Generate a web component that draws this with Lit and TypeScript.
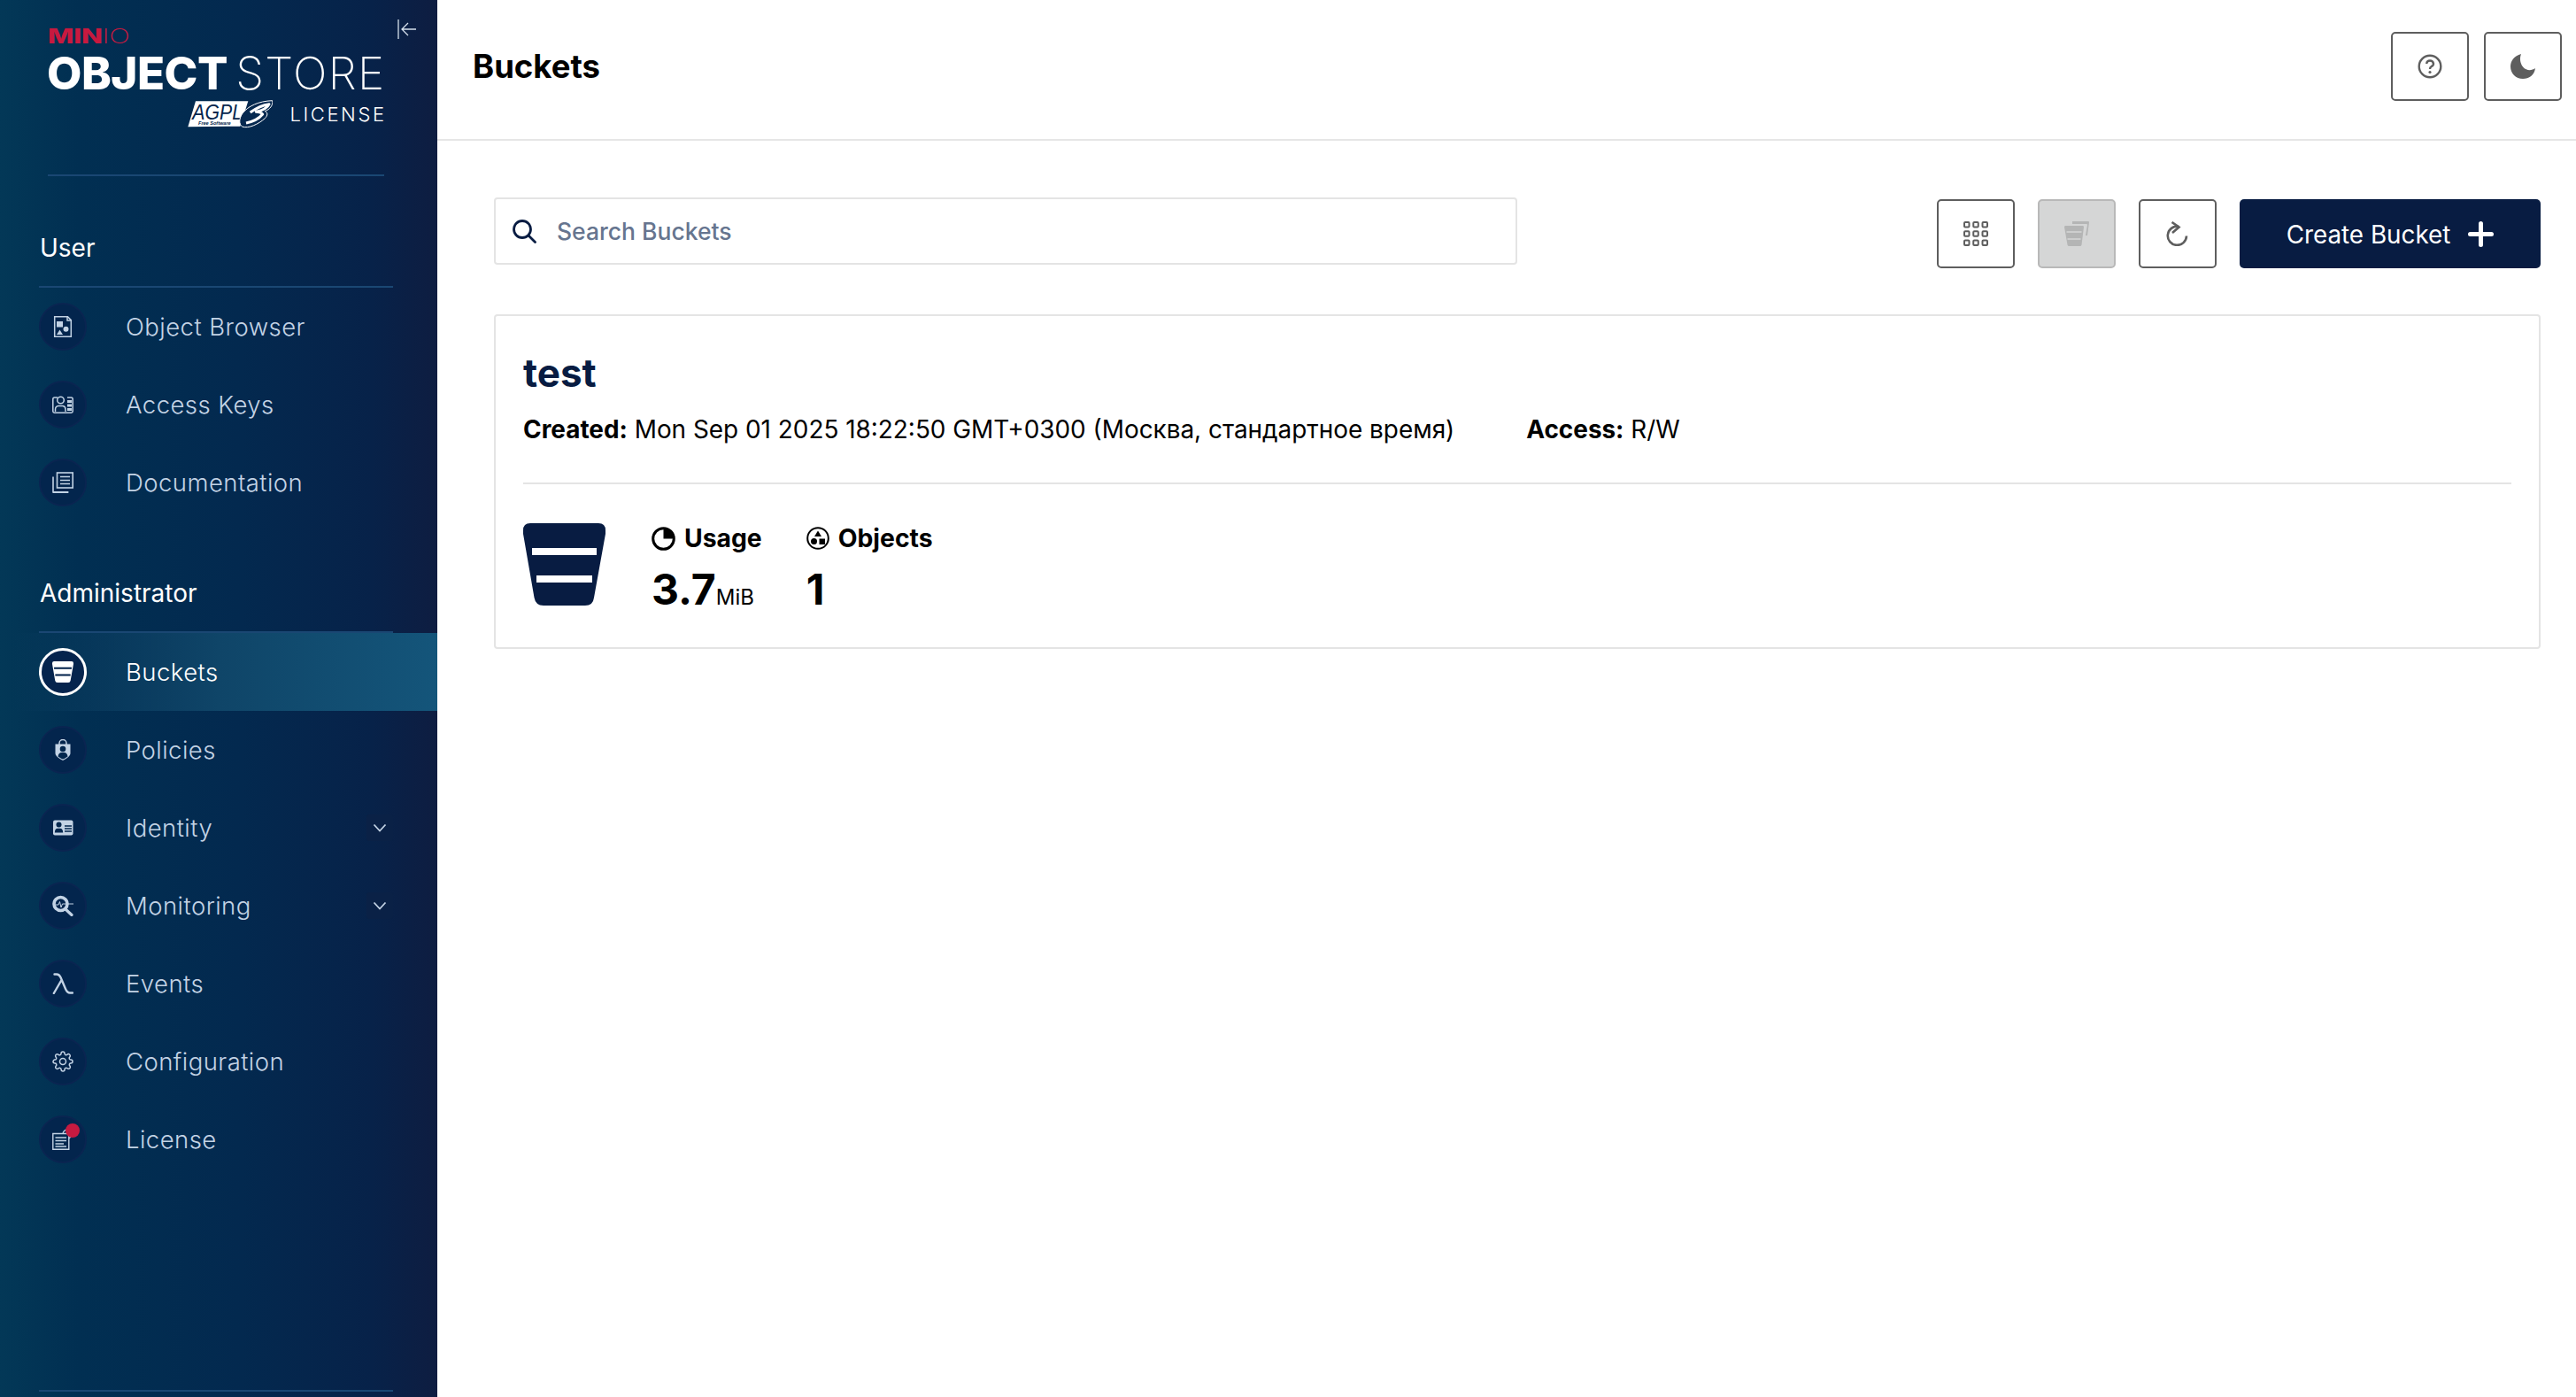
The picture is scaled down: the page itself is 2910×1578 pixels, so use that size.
import { LitElement, html, css, svg } from "lit";
import { customElement } from "lit/decorators.js";

const ic = (body: unknown, size = 24, vb = 24) =>
  html`<svg width=${size} height=${size} viewBox="0 0 ${vb} ${vb}">${body}</svg>`;

const bucketPath = "M8 0H85Q93 0 93 8V12L80 84Q79 93 70 93H23Q14 93 12.5 84L0 12V8Q0 0 8 0Z";

const icons: Record<string, unknown> = {
  object: ic(svg`<g fill="none" stroke="currentColor" stroke-width="1.5"><path d="M2.7 .8H17.5L21.3 4.6V23.2H2.7Z"/><path d="M17 .8V5H21.3"/></g><g fill="currentColor"><rect x="5" y="6" width="7" height="6.5"/><circle cx="15.5" cy="14.8" r="3"/><path d="M8.500 15.500L12 21H5Z"/></g>`),
  keys: ic(svg`<g fill="none" stroke="currentColor" stroke-width="1.5"><path d="M6 4H2.500Q.8 4 .8 6V19.500Q.8 21.200 2.500 21.200H21.500Q23.200 21.200 23.200 19.500V6Q23.200 4 21.500 4H17"/><circle cx="9.500" cy="7" r="3.800"/><path d="M3.500 20V17.500Q3.500 14 7 13.500H12Q15 14 15 17.500V20"/></g><g fill="currentColor"><rect x="17" y="7" width="5" height="3"/><rect x="17" y="11.500" width="5" height="3"/><rect x="17" y="16" width="5" height="3"/></g>`),
  docs: ic(svg`<g fill="none" stroke="currentColor" stroke-width="1.6"><rect x="5.500" y="1" width="17.700" height="17"/><path d="M1 5.500V23H18.500"/><path d="M1 23H18" stroke-width="2"/><path d="M9 5.500H20M9 9.500H20M9 13.500H20"/></g>`),
  bucket: html`<svg width="24" height="24" viewBox="0 0 93 93"><path fill="currentColor" d=${bucketPath}/><g fill="#05244d"><rect x="8" y="26" width="77" height="8"/><rect x="13" y="56" width="67" height="8"/></g></svg>`,
  policy: ic(svg`<path fill="none" stroke="currentColor" stroke-width="1.5" d="M8 6V4.500A4 4 0 0 1 16 4.500V6"/><path fill="currentColor" d="M3.500 5.500H20.500V16C20.500 19 15.500 22.500 12 24C8.500 22.500 3.500 19 3.500 16Z"/><circle cx="12" cy="11" r="3.300" fill="#03274e"/><path fill="#03274e" d="M6.500 19.500Q7 15.500 10 15H14Q17 15.500 17.500 19.500Q14 22 12 22.500Q10 22 6.500 19.500Z"/>`),
  identity: ic(svg`<rect x="1" y="3.500" width="22.500" height="17" rx="2" fill="currentColor"/><circle cx="7.500" cy="8.500" r="3" fill="#03274e"/><path fill="#03274e" d="M2.800 17.500Q3 13 6 12.800H9Q12 13 12.200 17.500Z"/><path stroke="#03274e" stroke-width="1.300" d="M14 10H22M14 13H22M14 16H22"/>`),
  monitoring: ic(svg`<circle cx="9.500" cy="10" r="7.500" fill="none" stroke="currentColor" stroke-width="3.600"/><path stroke="currentColor" stroke-width="3.200" stroke-linecap="round" d="M15 16L22 22.500"/><path fill="none" stroke="currentColor" stroke-width="1" d="M4 11H7L8.500 7.500L10 14L11.500 10H24"/>`),
  lambda: ic(svg`<path fill="none" stroke="currentColor" stroke-width="2.400" stroke-linecap="round" d="M2.500 1.500H5Q8 1.500 9.500 5L15 18Q17 22.500 20 22.500H23M10.500 8L1.800 23"/>`),
  config: html`<svg width="24" height="24" viewBox="0 0 24 24" fill="none" stroke="currentColor" stroke-width="1.500"><circle cx="12" cy="12" r="3.500"/><path d="M19.400 15a1.650 1.650 0 0 0 .33 1.820l.06.06a2 2 0 0 1 0 2.830 2 2 0 0 1-2.830 0l-.06-.06a1.650 1.650 0 0 0-1.820-.33 1.650 1.650 0 0 0-1 1.510V21a2 2 0 0 1-2 2 2 2 0 0 1-2-2v-.09A1.650 1.650 0 0 0 9 19.400a1.650 1.650 0 0 0-1.820.33l-.06.06a2 2 0 0 1-2.830 0 2 2 0 0 1 0-2.830l.06-.06a1.650 1.650 0 0 0 .33-1.820 1.650 1.650 0 0 0-1.510-1H3a2 2 0 0 1-2-2 2 2 0 0 1 2-2h.09A1.650 1.650 0 0 0 4.600 9a1.650 1.650 0 0 0-.33-1.820l-.06-.06a2 2 0 0 1 0-2.830 2 2 0 0 1 2.830 0l.06.06a1.650 1.650 0 0 0 1.820.33H9a1.650 1.650 0 0 0 1-1.510V3a2 2 0 0 1 2-2 2 2 0 0 1 2 2v.09a1.650 1.650 0 0 0 1 1.510 1.650 1.650 0 0 0 1.820-.33l.06-.06a2 2 0 0 1 2.830 0 2 2 0 0 1 0 2.830l-.06.06a1.650 1.650 0 0 0-.33 1.820V9a1.650 1.650 0 0 0 1.510 1H21a2 2 0 0 1 2 2 2 2 0 0 1-2 2h-.09a1.650 1.650 0 0 0-1.510 1z"/></svg>`,
  license: ic(svg`<circle cx="17" cy="6" r="5" fill="none" stroke="currentColor" stroke-width="1.300"/><path fill="#03274e" stroke="currentColor" stroke-width="1.400" d="M.8 5.500H18.800V23.300H.8Z"/><path stroke="currentColor" stroke-width="1.400" d="M3.500 10H16M3.500 13.500H16M3.500 17H13M3.500 20H16"/>`),
};

type Item = { id: string; label: string; active?: boolean; more?: boolean; dot?: boolean };
const userItems: Item[] = [
  { id: "object", label: "Object Browser" },
  { id: "keys", label: "Access Keys" },
  { id: "docs", label: "Documentation" },
];
const adminItems: Item[] = [
  { id: "bucket", label: "Buckets", active: true },
  { id: "policy", label: "Policies" },
  { id: "identity", label: "Identity", more: true },
  { id: "monitoring", label: "Monitoring", more: true },
  { id: "lambda", label: "Events" },
  { id: "config", label: "Configuration" },
  { id: "license", label: "License", dot: true },
];

@customElement("app-root")
export class AppRoot extends LitElement {
  static styles = css`
    :host { display: block; font-family: Inter, "Noto Sans", sans-serif; }
    * { box-sizing: border-box; }
    .app { display: flex; width: 2910px; height: 1578px; background: #fff; overflow: hidden; }

    .side { position: relative; width: 494px; flex: none; display: flex; flex-direction: column; padding-bottom: 6px;
      background: linear-gradient(90deg, #033857 0%, #012f52 18%, #03294f 55%, #072249 85%, #0e1d41 100%); }
    .collapse { position: absolute; left: 449px; top: 22px; color: #d5e0ec; display: block; }
    .logo { height: 199px; margin: 0 60px 0 54px; border-bottom: 2px solid #1a4773; padding-top: 28px; }
    .minio { display: block; height: 26px; line-height: 26px; font-size: 22.500px; color: #c8193f; font-weight: 800; white-space: nowrap;
      transform: scaleX(1.39); transform-origin: 0 50%; letter-spacing: -.2px; }
    .minio i { font-style: normal; font-weight: 200; }
    .product { display: flex; justify-content: space-between; height: 52px; line-height: 52px; margin: 3px 0 0 -1px; font-size: 51px; color: #fff; white-space: nowrap; letter-spacing: -.5px; }
    .product b { font-weight: 800; }
    .product span { font-weight: 200; letter-spacing: 1.300px; margin-right: -1.300px; }
    .license { display: flex; align-items: center; justify-content: flex-end; gap: 19px; height: 32px; margin-top: 4px; }
    .license span { color: #fff; font-size: 22px; font-weight: 300; letter-spacing: 2.600px; margin-right: -2.600px; }

    .section { margin: 0 50px 0 44px; padding: 61px 0 23px 1px; height: 126px; border-bottom: 2px solid #1a4773; color: #fff;
      font-size: 28px; line-height: 40px; }
    .item { display: flex; align-items: center; height: 88px; padding: 0 50px 0 44px; color: #c3d3e5; font-size: 27.500px; font-weight: 350; letter-spacing: .45px; }
    .item.on { color: #fff; background: linear-gradient(90deg, rgba(20,85,122,0) 3%, #0f4568 50%, #14557a 100%); }
    .disc { position: relative; flex: none; width: 54px; height: 54px; margin-right: 44px; border-radius: 50%; background: #03254d; border: 2px solid #0a2551;
      display: flex; align-items: center; justify-content: center; }
    .on .disc { border: 3px solid #fff; background: #05244d; }
    .dot { position: absolute; left: 28px; top: 7px; width: 16px; height: 16px; border-radius: 50%; background: #c61a40; }
    .label { flex: 1; }
    .chev { width: 30px; height: 30px; border-radius: 3px; background: #0a2146; display: flex; align-items: center; justify-content: center; }
    .foot { margin: auto 50px 0 44px; height: 2px; background: #1a4773; }

    .main { flex: 1; min-width: 0; display: flex; flex-direction: column; }
    .top { height: 159px; flex: none; border-bottom: 2px solid #e6e6e6; display: flex; align-items: center; justify-content: space-between; padding: 0 16px 7px 40px; }
    .top h1 { margin: 0; font-size: 36.500px; font-weight: 700; color: #000; }
    .btns { display: flex; gap: 17px; }
    .btn { width: 88px; height: 78px; border: 2px solid #5e5e5e; border-radius: 5px; background: #fff; display: flex; align-items: center; justify-content: center; color: #5e5e5e; padding: 0; }
    .btn.off { background: #d5d6d6; border-color: #b8b8b8; color: #b4b5b5; }

    .content { padding: 64px 40px 0 64px; }
    .bar { display: flex; justify-content: space-between; align-items: flex-start; height: 80px; margin-bottom: 52px; }
    .search { width: 1156px; height: 76px; border: 2px solid #e4e4e4; border-radius: 4px; display: flex; align-items: center; padding: 0 0 1px 18px; gap: 23px;
      font-size: 26.500px; font-weight: 500; color: #66758f; }
    .actions { display: flex; gap: 26px; padding-top: 2px; }
    .create { width: 340px; height: 78px; border: 0; border-radius: 5px; background: #081c42; color: #fff; display: flex; align-items: center; justify-content: center; gap: 20px;
      font-family: inherit; font-size: 27.800px; font-weight: 400; padding: 0; }
    .create span { margin-top: 2px; }

    .card { border: 2px solid #e4e4e4; border-radius: 4px; padding: 34px 31px 47px; }
    .name { height: 60px; line-height: 60px; font-size: 44px; font-weight: 700; color: #081c42; }
    .info { display: flex; gap: 81px; height: 40px; margin-top: 14px; line-height: 40px; font-size: 27.900px; color: #000; }
    .info b { font-weight: 700; }
    .rule { height: 2px; background: #e4e4e4; margin: 40px 0 44px; }
    .stats { display: flex; height: 93px; gap: 50px; color: #000; }
    .bigbucket { margin-right: 2px; flex: none; }
    .stat-label { display: flex; align-items: center; gap: 10px; height: 32px; margin-top: 1px; font-size: 28.300px; font-weight: 700; }
    .stat-value { height: 56px; line-height: 56px; margin-top: 14px; font-size: 48px; font-weight: 700; }
    .stat-value small { font-size: 24px; font-weight: 400; }
    .nudge { margin-left: 2px; }
  `;

  private navItem(i: Item) {
    return html`<div class="item ${i.active ? "on" : ""}">
      <span class="disc">${icons[i.id]}${i.dot ? html`<span class="dot"></span>` : null}</span>
      <span class="label">${i.label}</span>
      ${i.more ? html`<span class="chev"><svg width="16" height="16" viewBox="0 0 16 16"><path d="M1.500 4.500L8 11.500L14.500 4.500" fill="none" stroke="#c3d3e5" stroke-width="1.800"/></svg></span>` : null}
    </div>`;
  }

  render() {
    return html`<div class="app">
      <aside class="side">
        <svg class="collapse" width="22" height="22" viewBox="0 0 22 22"><path d="M1 0V22M21 11H5M12 4L5 11L12 18" fill="none" stroke="currentColor" stroke-width="1.300"/></svg>
        <div class="logo">
          <span class="minio">MIN<i>IO</i></span>
          <div class="product"><b>OBJECT</b><span>STORE</span></div>
          <div class="license">
            <svg width="96" height="32" viewBox="0 0 288 96">
              <path d="M1 91L27 4H205L178 89Z" fill="#fff"/>
              <text x="16" y="66" font-family="Liberation Sans" font-style="italic" font-size="70" fill="#06264d" textLength="170" lengthAdjust="spacingAndGlyphs">AGPL</text>
              <text x="36" y="84" font-family="Liberation Sans" font-style="italic" font-weight="700" font-size="15" fill="#06264d" textLength="110" lengthAdjust="spacingAndGlyphs">Free Software</text>
              <path d="M287 2C240 4 205 20 186 45C175 60 172 82 185 90C205 98 240 82 262 62C272 52 272 42 262 38C278 32 290 18 287 2Z" fill="#05284f" stroke="#fff" stroke-width="3"/>
              <path d="M212 42Q245 18 276 14Q268 32 232 40Q250 42 254 48Q236 70 198 78" fill="none" stroke="#fff" stroke-width="9" stroke-linejoin="round"/>
            </svg>
            <span>LICENSE</span>
          </div>
        </div>
        <div class="section">User</div>
        ${userItems.map((i) => this.navItem(i))}
        <div class="section">Administrator</div>
        ${adminItems.map((i) => this.navItem(i))}
        <div class="foot"></div>
      </aside>
      <main class="main">
        <header class="top">
          <h1>Buckets</h1>
          <div class="btns">
            <button class="btn"><svg width="28" height="28" viewBox="0 0 28 28"><circle cx="14" cy="14" r="12.300" fill="none" stroke="currentColor" stroke-width="2.400"/><path d="M10.200 11Q10.500 7.500 14 7.500T18 11Q18 13 15.500 14.200Q14 15 14 17" fill="none" stroke="currentColor" stroke-width="2.400"/><circle cx="14" cy="20.500" r="1.600" fill="currentColor"/></svg></button>
            <button class="btn"><svg width="28" height="28" viewBox="0 0 28 28"><path d="M12 0C4 2 0 8 0 14C0 22 6 28 14 28C21 28 27 24 28 16C24 19 18 19 14.500 15C11 11 10 5 12 0Z" fill="currentColor"/></svg></button>
          </div>
        </header>
        <div class="content">
          <div class="bar">
            <div class="search">
              <svg width="28" height="28" viewBox="0 0 28 28"><circle cx="12" cy="12" r="9.500" fill="none" stroke="#081c42" stroke-width="2.800"/><path d="M19 19L26.500 26.500" stroke="#081c42" stroke-width="2.800" stroke-linecap="round"/></svg>
              <span>Search Buckets</span>
            </div>
            <div class="actions">
              <button class="btn"><svg width="28" height="28" viewBox="0 0 28 28"><g fill="none" stroke="currentColor" stroke-width="2">${[1, 11.25, 21.5].map((y) => [1, 11.25, 21.5].map((x) => svg`<rect x=${x} y=${y} width="5.500" height="5.500" rx="1"/>`))}</g></svg></button>
              <button class="btn off"><svg width="28" height="28" viewBox="0 0 28 28"><path d="M9 0H27Q28 0 28 1L26 16H24L26 4Q26 3 25 3H9Z" fill="currentColor"/><path d="M1 5H21Q22 5 22 6.500L19.500 26.500Q19 28 18 28H5Q4 28 3.500 26.500L0 6.500Q0 5 1 5Z" fill="currentColor"/><path d="M2.500 12H19.500M3.500 20H18.500" stroke="#d5d6d6" stroke-width="1.500"/></svg></button>
              <button class="btn"><svg class="nudge" width="28" height="28" viewBox="0 0 28 28"><path d="M14 5.800A10.600 10.600 0 1 0 23 16.500" fill="none" stroke="currentColor" stroke-width="2.600"/><path d="M6.500 1L14.500 6.500L7 13" fill="none" stroke="currentColor" stroke-width="2.600"/></svg></button>
              <button class="create"><span>Create Bucket</span><svg width="29" height="29" viewBox="0 0 29 29"><path d="M14.500 2.500V26.500M2.500 14.500H26.500" stroke="#fff" stroke-width="5" stroke-linecap="round"/></svg></button>
            </div>
          </div>
          <section class="card">
            <div class="name">test</div>
            <div class="info">
              <span><b>Created:</b> Mon Sep 01 2025 18:22:50 GMT+0300 (Москва, стандартное время)</span>
              <span><b>Access:</b> R/W</span>
            </div>
            <div class="rule"></div>
            <div class="stats">
              <svg class="bigbucket" width="93" height="93" viewBox="0 0 93 93"><path fill="#081c42" d=${bucketPath}/><g fill="#fff"><rect x="10" y="28" width="73" height="8"/><rect x="15" y="59" width="63" height="8"/></g></svg>
              <div>
                <div class="stat-label"><svg width="27" height="27" viewBox="0 0 27 27"><circle cx="13.500" cy="13.500" r="11.800" fill="none" stroke="#000" stroke-width="3"/><path d="M13.500 2V13.500H25A11.500 11.500 0 0 0 13.500 2Z" fill="#000"/></svg>Usage</div>
                <div class="stat-value">3.7<small>MiB</small></div>
              </div>
              <div>
                <div class="stat-label"><svg width="26" height="26" viewBox="0 0 26 26"><circle cx="13" cy="13" r="11.800" fill="none" stroke="#000" stroke-width="2"/><path d="M13 4.500L17 11H9Z" fill="#000"/><circle cx="8.500" cy="16.500" r="3.500" fill="#000"/><rect x="14.500" y="13.500" width="6.500" height="6.500" fill="#000"/></svg>Objects</div>
                <div class="stat-value">1</div>
              </div>
            </div>
          </section>
        </div>
      </main>
    </div>`;
  }
}
